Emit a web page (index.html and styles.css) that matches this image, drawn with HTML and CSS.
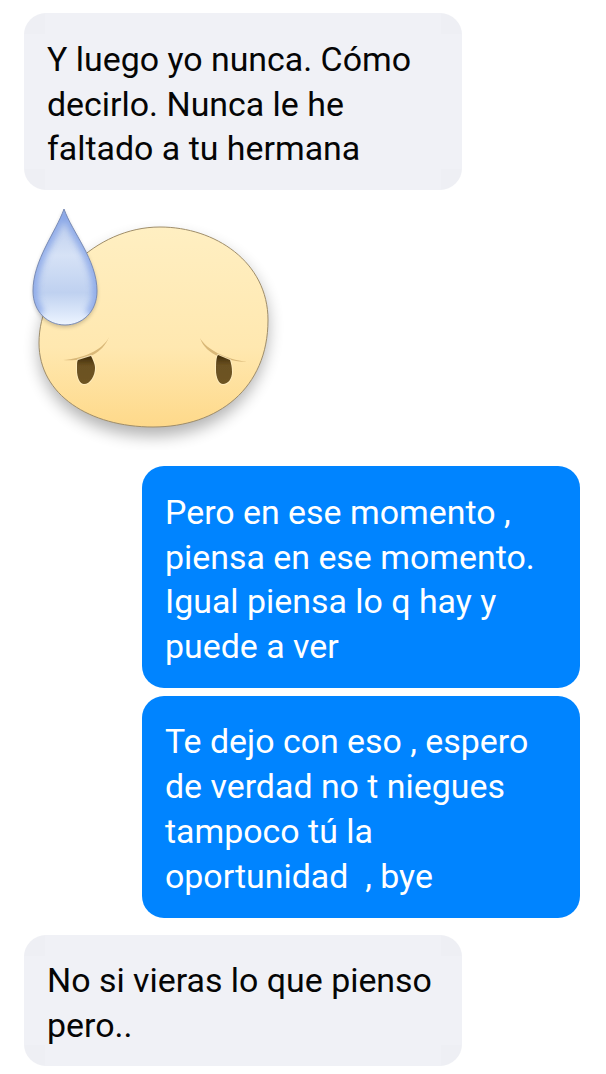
FILE: index.html
```html
<!DOCTYPE html>
<html lang="es">

<head>
    <meta charset="UTF-8">
    <meta name="viewport" content="width=device-width, initial-scale=1.0">
    <title>Chat</title>
    <link rel="stylesheet" href="styles.css">
</head>

<body>

    <div class="chat">
        <div class="bubble theirs">Y luego yo nunca. Cómo<br>decirlo. Nunca le he<br>faltado a tu hermana</div>

        <!-- Sticker: cara con gota de sudor -->
        <svg class="sticker" width="270" height="250" viewBox="20 200 270 250">
            <defs>
                <linearGradient id="faceFill" x1="0" y1="0" x2="0" y2="1">
                    <stop offset="0" stop-color="#ffefc2"/>
                    <stop offset="0.6" stop-color="#ffe8b0"/>
                    <stop offset="1" stop-color="#fed98a"/>
                </linearGradient>
                <linearGradient id="dropFill" x1="0" y1="0" x2="0" y2="1">
                    <stop offset="0" stop-color="#b4c6ea"/>
                    <stop offset="0.4" stop-color="#d6e2f6"/>
                    <stop offset="0.72" stop-color="#bfd1f0"/>
                    <stop offset="0.92" stop-color="#dfeafb"/>
                    <stop offset="1" stop-color="#eef5ff"/>
                </linearGradient>
                <linearGradient id="eyeFill" x1="0" y1="0" x2="0" y2="1">
                    <stop offset="0" stop-color="#3f2b08"/>
                    <stop offset="0.35" stop-color="#6b5120"/>
                    <stop offset="1" stop-color="#6e5420"/>
                </linearGradient>
                <filter id="blurBig" x="-20%" y="-20%" width="140%" height="140%">
                    <feGaussianBlur stdDeviation="8"/>
                </filter>
                <filter id="blurSmall" x="-20%" y="-20%" width="140%" height="140%">
                    <feGaussianBlur stdDeviation="2"/>
                </filter>
                <filter id="blurMid" x="-20%" y="-20%" width="140%" height="140%">
                    <feGaussianBlur stdDeviation="3"/>
                </filter>
                <filter id="blurTiny" x="-20%" y="-20%" width="140%" height="140%">
                    <feGaussianBlur stdDeviation="0.7"/>
                </filter>
                <clipPath id="dropClip">
                    <path d="M64 209C72 232 97 260 97 291C97 312 82 325 65 325C48 325 33 312 33 291C33 260 56 232 64 209Z"/>
                </clipPath>
            </defs>
            <path class="face-shadow" filter="url(#blurBig)" d="M160 236C215 236 268 268 268 326C268 394 218 436 153 436C90 436 39 402 39 350C39 292 95 236 160 236Z"/>
            <path class="face" d="M160 227C215 227 268 262 268 320C268 388 218 427 153 427C90 427 39 395 39 343C39 285 95 227 160 227Z"/>
            <g filter="url(#blurTiny)">
                <path class="brow" d="M63 360C80 362 102 356 109 337C103 350 82 359 63 360Z"/>
                <path class="brow" d="M247 362C228 361 206 356 200 338C207 350 226 359 247 362Z"/>
                <path class="eye-halo" d="M77 370C77 364 77 361 78 360L91 356C94 362 95 365 95 368C95 376 90 384 84 384C80 384 77 378 77 370Z"/>
                <path class="eye-halo" d="M216 370C216 364 216 358 218 355L230 360C231 363 232 367 232 372C232 379 228 384 223 384C219 384 216 378 216 370Z"/>
                <path class="eye" d="M77 370C77 364 77 361 78 360L91 356C94 362 95 365 95 368C95 376 90 384 84 384C80 384 77 378 77 370Z"/>
                <path class="eye" d="M216 370C216 364 216 358 218 355L230 360C231 363 232 367 232 372C232 379 228 384 223 384C219 384 216 378 216 370Z"/>
            </g>
            <path class="drop-glow" filter="url(#blurSmall)" d="M64 211C72 234 97 262 97 293C97 314 82 327 65 327C48 327 33 314 33 293C33 262 56 234 64 211Z"/>
            <path class="drop" d="M64 209C72 232 97 260 97 291C97 312 82 325 65 325C48 325 33 312 33 291C33 260 56 232 64 209Z"/>
            <g clip-path="url(#dropClip)">
                <path class="drop-rim" filter="url(#blurMid)" d="M64 209C72 232 97 260 97 291C97 300 94 308 89 314M41 314C36 308 33 300 33 291C33 260 56 232 64 209"/>
            </g>
            <path class="drop-line" d="M64 209C72 232 97 260 97 291C97 312 82 325 65 325C48 325 33 312 33 291C33 260 56 232 64 209Z"/>
        </svg>

        <div class="bubble mine">Pero en ese momento ,<br>piensa en ese momento.<br>Igual piensa lo q hay y<br>puede a ver</div>
        <div class="bubble mine next">Te dejo con eso , espero<br>de verdad no t niegues<br>tampoco tú la<br>oportunidad&nbsp; , bye</div>
        <div class="bubble theirs last">No si vieras lo que pienso<br>pero..</div>
    </div>

</body>

</html>
```
FILE: styles.css
```css
html,
body {
    margin: 0;
    background-color: #fff;
}

body {
    font-family: Roboto, Arial, sans-serif;
    overflow: hidden;
}

.chat {
    display: flex;
    flex-direction: column;
    padding: 13px 26px 8px 24px;
}

.bubble {
    box-sizing: border-box;
    width: 438px;
    padding: 25px 23px 19px;
    font-size: 33.9px;
    line-height: 44.5px;
    border-radius: 22px;
}

/* las esquinas del original tienen un tono algo distinto */
.theirs {
    padding-bottom: 18.5px;
    background-color: #f0f1f6;
    background-image:
        linear-gradient(#eeeff4, #eeeff4),
        linear-gradient(#eeeff4, #eeeff4),
        linear-gradient(#eeeff4, #eeeff4),
        linear-gradient(#eeeff4, #eeeff4);
    background-size: 21px 21px;
    background-repeat: no-repeat;
    background-position: left top, right top, left bottom, right bottom;
    color: #050505;
}

.mine {
    align-self: flex-end;
    background-color: #0084ff;
    color: #fff;
}

.next {
    margin-top: 8px;
    padding: 23px 23px 19px;
    line-height: 45px;
}

.last {
    margin-top: 17px;
    padding-top: 24px;
    padding-bottom: 18px;
}

.sticker {
    display: block;
    margin: 10px 0 16px -4px;
}

.face {
    fill: url(#faceFill);
    stroke: #a08e6a;
    stroke-width: 1;
}

.face-shadow {
    fill: #000;
    opacity: 0.3;
}

.brow {
    fill: #d9b878;
}

.eye {
    fill: url(#eyeFill);
}

.eye-halo {
    fill: none;
    stroke: #fff4d2;
    stroke-width: 2;
    opacity: 0.6;
}

.drop {
    fill: url(#dropFill);
}

.drop-glow {
    fill: #000;
    opacity: 0.22;
}

.drop-rim {
    fill: none;
    stroke: #7f9fe6;
    stroke-width: 9;
    opacity: 0.8;
}

.drop-line {
    fill: none;
    stroke: #7a8cb6;
    stroke-width: 1;
}
```
